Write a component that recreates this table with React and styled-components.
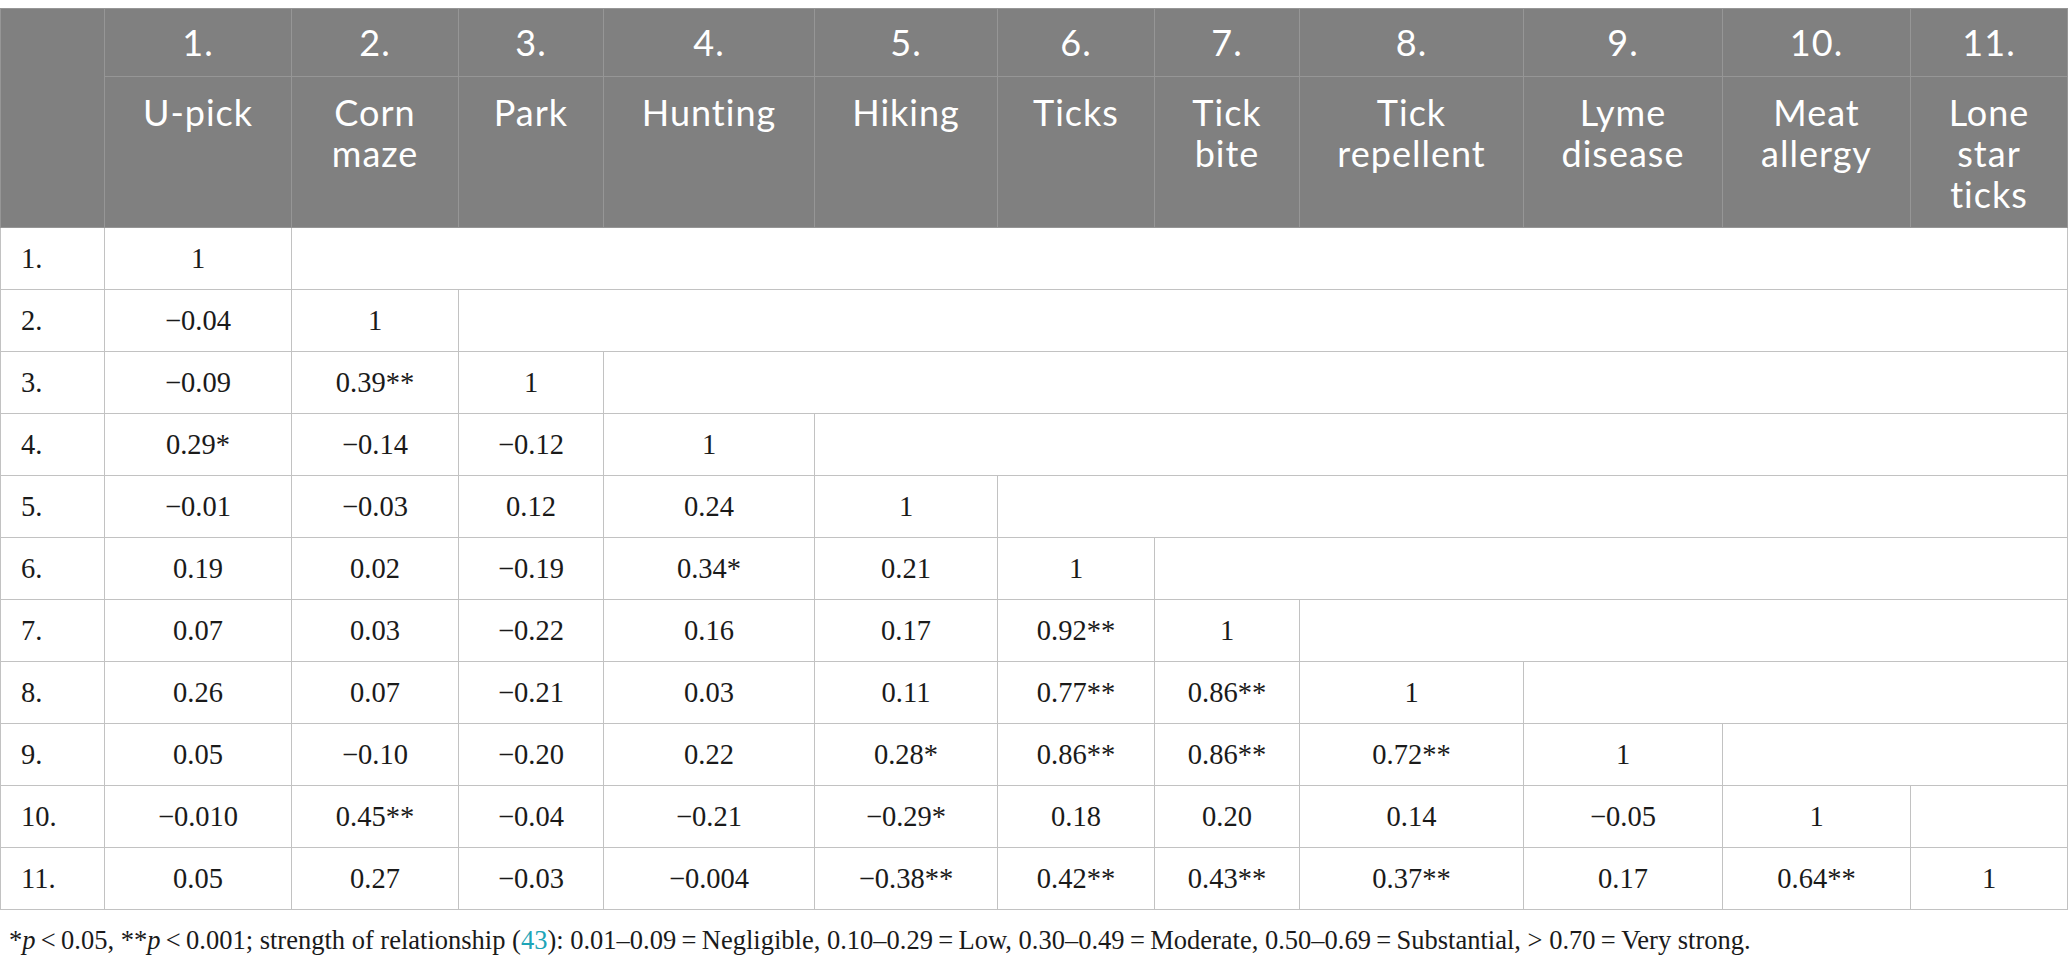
import React from "react";
import styled, { createGlobalStyle } from "styled-components";

const Global = createGlobalStyle`
  html, body { margin: 0; padding: 0; background: #ffffff; }
  body { font-family: "Liberation Serif", "Times New Roman", serif; }
`;

const Page = styled.div`
  padding-top: 8px;
  width: 2068px;
`;

const Table = styled.table`
  width: 2068px;
  table-layout: fixed;
  border-collapse: collapse;
  border-top: 1px solid #b4b4b4;
`;

const HeadCell = styled.th`
  background: #808080;
  color: #ffffff;
  font-family: Lato, "Open Sans", sans-serif;
  font-weight: 400;
  font-size: 36px;
  letter-spacing: 1px;
  line-height: 41px;
  text-align: center;
  border: 1px solid #969696;
  padding: ${(p) => (p.$label ? "15px 4px 0" : "0 4px")};
  vertical-align: ${(p) => (p.$label ? "top" : "middle")};
`;

const NumRow = styled.tr`
  height: 68px;
`;

const LabelRow = styled.tr`
  height: 151px;
`;

const BodyRow = styled.tr`
  height: 62px;
`;

const Cell = styled.td`
  border: 1px solid #c2c2c2;
  font-family: "Liberation Serif", "Times New Roman", serif;
  font-size: 28.5px;
  color: #1a1a1a;
  text-align: ${(p) => (p.$label ? "left" : "center")};
  padding: ${(p) => (p.$label ? "0 0 0 20px" : "0 4px")};
  vertical-align: middle;
  white-space: nowrap;
`;

const Note = styled.p`
  margin: 14px 0 0 9px;
  font-family: "Liberation Serif", "Times New Roman", serif;
  font-size: 26.5px;
  line-height: 32px;
  color: #1a1a1a;
  white-space: nowrap;
`;

const Ital = styled.i`
  font-style: italic;
`;

const NoteLink = styled.span`
  color: #1ea5b8;
`;

const widths = [104, 187, 167, 145, 211, 183, 157, 145, 224, 199, 188, 157];

const labels = [
  ["U-pick"],
  ["Corn", "maze"],
  ["Park"],
  ["Hunting"],
  ["Hiking"],
  ["Ticks"],
  ["Tick", "bite"],
  ["Tick", "repellent"],
  ["Lyme", "disease"],
  ["Meat", "allergy"],
  ["Lone", "star", "ticks"],
];

const rows = [
  ["1"],
  ["−0.04", "1"],
  ["−0.09", "0.39**", "1"],
  ["0.29*", "−0.14", "−0.12", "1"],
  ["−0.01", "−0.03", "0.12", "0.24", "1"],
  ["0.19", "0.02", "−0.19", "0.34*", "0.21", "1"],
  ["0.07", "0.03", "−0.22", "0.16", "0.17", "0.92**", "1"],
  ["0.26", "0.07", "−0.21", "0.03", "0.11", "0.77**", "0.86**", "1"],
  ["0.05", "−0.10", "−0.20", "0.22", "0.28*", "0.86**", "0.86**", "0.72**", "1"],
  ["−0.010", "0.45**", "−0.04", "−0.21", "−0.29*", "0.18", "0.20", "0.14", "−0.05", "1"],
  ["0.05", "0.27", "−0.03", "−0.004", "−0.38**", "0.42**", "0.43**", "0.37**", "0.17", "0.64**", "1"],
];

const T = "\u2009";

export default function App() {
  return (
    <Page>
      <Global />
      <Table>
        <colgroup>
          {widths.map((w, i) => (
            <col key={i} style={{ width: w }} />
          ))}
        </colgroup>
        <thead>
          <NumRow>
            <HeadCell rowSpan={2} />
            {labels.map((_, i) => (
              <HeadCell key={i}>{i + 1}.</HeadCell>
            ))}
          </NumRow>
          <LabelRow>
            {labels.map((lines, i) => (
              <HeadCell key={i} $label>
                {lines.map((l, j) => (
                  <React.Fragment key={j}>
                    {j > 0 && <br />}
                    {l}
                  </React.Fragment>
                ))}
              </HeadCell>
            ))}
          </LabelRow>
        </thead>
        <tbody>
          {rows.map((vals, i) => (
            <BodyRow key={i}>
              <Cell $label>{i + 1}.</Cell>
              {vals.map((v, j) => (
                <Cell key={j}>{v}</Cell>
              ))}
              {vals.length < 11 && <Cell colSpan={11 - vals.length} />}
            </BodyRow>
          ))}
        </tbody>
      </Table>
      <Note>
        *<Ital>p</Ital>{T}&lt;{T}0.05, **<Ital>p</Ital>{T}&lt;{T}0.001; strength of relationship (
        <NoteLink>43</NoteLink>): 0.01–0.09{T}={T}Negligible, 0.10–0.29{T}={T}Low, 0.30–0.49{T}={T}Moderate,
        0.50–0.69{T}={T}Substantial, &gt; 0.70{T}={T}Very strong.
      </Note>
    </Page>
  );
}
